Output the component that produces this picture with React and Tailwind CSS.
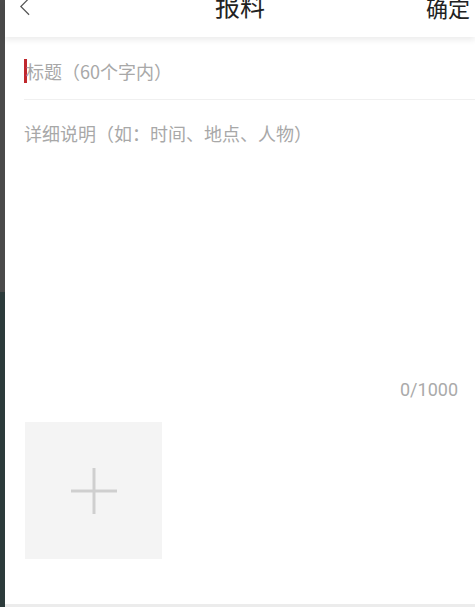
export default function App() {
  return (
    <div
      className="flex h-[607px] w-[475px] overflow-hidden bg-white"
      style={{ fontFamily: '"Noto Sans CJK SC", "Noto Sans", sans-serif' }}
    >
      <div className="flex w-[5px] shrink-0 flex-col">
        <div className="h-[292px] bg-[#4a4a4a]" />
        <div className="flex-1 bg-[#2c3b3b]" />
      </div>
      <div className="flex min-w-0 flex-1 flex-col">
        <header className="relative z-10 flex h-[37px] justify-between bg-white pr-[5px] pl-[14px] shadow-[0_3px_6px_rgba(0,0,0,0.08)]">
          <svg viewBox="0 0 12 20" className="-mt-[3px] h-[19px] w-[11px]" fill="none" stroke="#555" strokeWidth="1.3">
            <path d="M11 1 L2 10 L11 19" />
          </svg>
          <h1 className="absolute left-1/2 top-[-15px] -translate-x-1/2 text-[25px] leading-[40px] text-[#222]">报料</h1>
          <span className="-mt-[10px] text-[22px] leading-[34px] text-[#222]">确定</span>
        </header>
        <div className="flex-1 pl-[19px]">
          <div className="flex h-[63px] items-center border-b border-[#f0f0f0] pt-[6px]">
            <span className="h-[24px] w-[3px] bg-[#c0282d]" />
            <span className="-ml-[1px] text-[18px] text-[#a8a8a8]">标题（60个字内）</span>
          </div>
          <div className="h-[276px] pt-[20px] text-[18px] text-[#a8a8a8]">详细说明（如：时间、地点、人物）</div>
          <div className="pr-[17px] text-right text-[18px] text-[#aaa] font-['Roboto',sans-serif]">0/1000</div>
          <div className="mt-[19px] ml-[1px] flex h-[137px] w-[137px] items-center justify-center bg-[#f4f4f4]">
            <svg viewBox="0 0 46 46" className="h-[46px] w-[46px]" stroke="#cfcfcf" strokeWidth="3">
              <path d="M23 0 V46 M0 23 H46" />
            </svg>
          </div>
        </div>
        <div className="h-[3px] bg-[#ececec]" />
      </div>
    </div>
  )
}
